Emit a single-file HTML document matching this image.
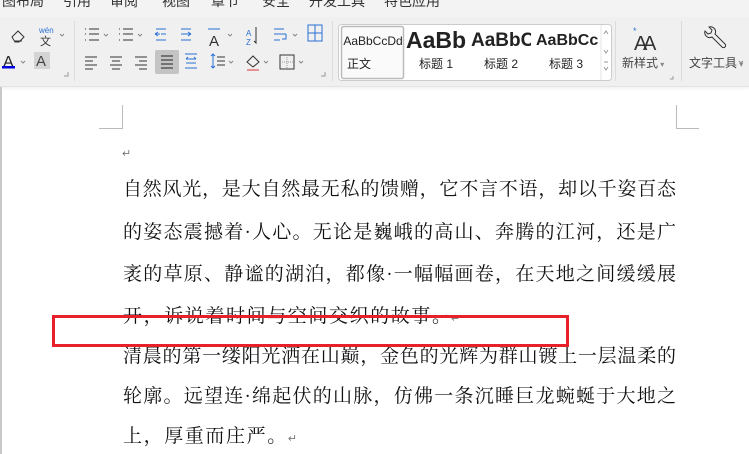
<!DOCTYPE html>
<html><head><meta charset="utf-8"><style>
body{margin:0;width:749px;height:454px;overflow:hidden;background:#fff;position:relative;font-family:"Liberation Sans","Noto Sans CJK SC",sans-serif}
.a{position:absolute}
#menu{left:0;top:0;width:749px;height:17px;background:#f3f3f3;overflow:hidden}
#menu span{position:absolute;top:-9px;font-size:14px;color:#333}
#tb{left:0;top:17px;width:749px;height:69px;background:#f0f0f0;border-bottom:1px solid #e4e4e4;box-shadow:0 2px 3px rgba(0,0,0,.05)}
.sep{position:absolute;top:4px;width:1px;height:60px;background:#dcdcdc}
.t{position:absolute;font-size:13px;color:#222}
.doc{font-family:"Liberation Serif","Noto Serif CJK SC",serif;font-size:19px;color:#111;position:absolute;left:123px;width:553px;text-align:justify;text-align-last:justify;white-space:nowrap;line-height:24px}
.ret{color:#777;font-size:11px}
</style></head><body>
<div id="menu" class="a">
<span style="left:2px">图布局</span><span style="left:63px">引用</span><span style="left:110px">审阅</span><span style="left:162px">视图</span><span style="left:211px">章节</span><span style="left:262px">安全</span><span style="left:309px">开发工具</span><span style="left:384px">特色应用</span>
</div>
<div id="tb" class="a">
<div class="sep" style="left:74px"></div><div class="sep" style="left:332px"></div><div class="sep" style="left:615px"></div><div class="sep" style="left:681px"></div>
<svg class="a" style="left:0;top:0" width="749" height="69" fill="none" stroke="#333" stroke-width="1">
<path d="M12 20 l6-6 6 6-5 5h-4z M14 24h8"/>
<text x="39" y="16" font-size="8" fill="#2a6fd6" stroke="none" font-family="Liberation Sans">wén</text>
<text x="40" y="28" font-size="11" fill="#333" stroke="none" font-family="Noto Sans CJK SC">文</text>
<path d="M60 17l2 2 2-2" stroke="#888"/>
<text x="3" y="50" font-size="16" fill="#222" stroke="none" font-family="Liberation Sans">A</text>
<rect x="2" y="49" width="13" height="2.5" fill="#0000e0" stroke="none"/>
<path d="M21 44l2 2 2-2" stroke="#888"/>
<rect x="34" y="35" width="16" height="17" fill="#d4d4d4" stroke="none"/>
<text x="36" y="49" font-size="15" fill="#444" stroke="none" font-family="Liberation Sans">A</text>
<path d="M64 59h4v-4" stroke="#999"/>
<path d="M85 12h1M85 17h1M85 23h1M89 12h10M89 17h10M89 23h10"/><path d="M104 17l2 2 2-2" stroke="#888"/>
<path d="M119 12h1M119 17h1M119 23h1M123 12h10M123 17h10M123 23h10"/><path d="M138 17l2 2 2-2" stroke="#888"/>
<path d="M156 12h10M161 17h5M156 23h10M155 17l3-2M155 17l3 2M155 17h5" stroke="#2a6fd6"/>
<path d="M181 12h10M181 17h5M181 23h10M191 17l-3-2M191 17l-3 2M186 17h5" stroke="#2a6fd6"/>
<path d="M208 12h12" stroke="#2a6fd6"/><text x="209" y="29" font-size="15" fill="#333" stroke="none" font-family="Liberation Sans">A</text><path d="M228 17l2 2 2-2" stroke="#888"/>
<text x="246" y="19" font-size="8" fill="#2a6fd6" stroke="none">A</text><text x="246" y="28" font-size="8" fill="#2a6fd6" stroke="none">Z</text><path d="M256 10v16l-2-2" />
<path d="M274 12h10M274 17h12M274 23h6M286 17v5h-4" stroke="#2a6fd6"/><path d="M293 17l2 2 2-2" stroke="#888"/>
<rect x="308" y="8" width="14" height="16" stroke="#2a6fd6"/><path d="M308 16h14M315 8v16" stroke="#2a6fd6"/>
<path d="M85 40h12M85 44h8M85 48h12M85 52h8"/>
<path d="M110 40h12M112 44h8M110 48h12M112 52h8"/>
<path d="M135 40h12M139 44h8M135 48h12M139 52h8"/>
<rect x="155" y="33" width="24" height="24" rx="2" fill="#c4c4c4" stroke="none"/>
<path d="M161 39h12M161 43h12M161 47h12M161 51h12" stroke="#222"/>
<path d="M185 37h12M185 51h12M186 42h10M186 42l2-2M196 42l-2-2M186 46h10" stroke="#2a6fd6"/>
<path d="M213 37v14M211 39l2-2 2 2M211 49l2 2 2-2" stroke="#2a6fd6"/><path d="M217 40h8M217 44h8M217 48h8"/><path d="M229 44l2 2 2-2" stroke="#888"/>
<path d="M247 45l6-6 6 6-6 5z"/><path d="M247 53h12" stroke="#d33"/><path d="M264 44l2 2 2-2" stroke="#888"/>
<rect x="280" y="38" width="14" height="14"/><path d="M287 38v14M280 45h14" stroke="#999" stroke-dasharray="1 1"/><path d="M299 44l2 2 2-2" stroke="#888"/>
<path d="M321 59h4v-4" stroke="#999"/>
<rect x="338.5" y="7.5" width="273" height="56" rx="3" fill="#fff" stroke="#ccc"/>
<rect x="341.5" y="9.5" width="62" height="52" rx="2" fill="#fafafa" stroke="#bbb" stroke-width="1.5"/>
<path d="M601 8v55" stroke="#e4e4e4"/>
<path d="M604 17l2-3 2 3M604 33l2 3 2-3M604 45h4M604 50l2 3 2-3" stroke="#999"/>
<text x="634" y="33" font-size="20" fill="#333" stroke="none" font-family="Liberation Sans">A</text><text x="643" y="33" font-size="20" fill="#333" stroke="none" font-family="Liberation Sans">A</text>
<text x="633" y="17" font-size="9" fill="#2a6fd6" stroke="none">*</text>
<path d="M670 62h3v-3" stroke="#999"/>
<path d="M705 14a5 5 0 0 0 7 6l10 10a2 2 0 0 0 3-3l-10-10a5 5 0 0 0-6-7l3 3-1 3-3 1z"/>
<path d="M739 44l2 2 2-2" stroke="#888"/>
</svg>
<div class="t" style="left:341px;top:17px;width:64px;text-align:center;font-size:12px">AaBbCcDd</div>
<div class="t" style="left:347px;top:38px;font-size:12px">正文</div>
<div class="t" style="left:406px;top:10px;font-size:23px;font-weight:bold">AaBb</div>
<div class="t" style="left:471px;top:13px;font-size:19px;font-weight:bold;width:60px;overflow:hidden">AaBbC</div>
<div class="t" style="left:536px;top:15px;font-size:16px;font-weight:bold;width:62px;overflow:hidden">AaBbCc</div>
<div class="t" style="left:419px;top:38px;font-size:12px">标题 1</div>
<div class="t" style="left:484px;top:38px;font-size:12px">标题 2</div>
<div class="t" style="left:549px;top:38px;font-size:12px">标题 3</div>
<div class="t" style="left:622px;top:37px;font-size:12px;color:#444">新样式<span style="font-size:8px;color:#888"> ▾</span></div>
<div class="t" style="left:689px;top:37px;font-size:12px;color:#444">文字工具<span style="font-size:8px;color:#888"> ▾</span></div>
</div>
<div class="a" style="left:0;top:87px;width:2px;height:367px;background:#c8c8c8"></div>
<div class="a" style="left:99px;top:128px;width:23px;height:1px;background:#bbb"></div>
<div class="a" style="left:122px;top:105px;width:1px;height:24px;background:#bbb"></div>
<div class="a" style="left:676px;top:105px;width:1px;height:24px;background:#bbb"></div>
<div class="a" style="left:676px;top:128px;width:23px;height:1px;background:#bbb"></div>
<div class="a ret" style="left:122px;top:147px">↵</div>
<div class="doc" style="top:178px">自然风光，是大自然最无私的馈赠，它不言不语，却以千姿百态</div>
<div class="doc" style="top:221px">的姿态震撼着·人心。无论是巍峨的高山、奔腾的江河，还是广</div>
<div class="doc" style="top:263px">袤的草原、静谧的湖泊，都像·一幅幅画卷，在天地之间缓缓展</div>
<div class="doc" style="top:305px;text-align-last:left;letter-spacing:1.6px">开，诉说着时间与空间交织的故事。·<span class="ret">↵</span></div>
<div class="doc" style="top:345px">清晨的第一缕阳光洒在山巅，金色的光辉为群山镀上一层温柔的</div>
<div class="doc" style="top:385px">轮廓。远望连·绵起伏的山脉，仿佛一条沉睡巨龙蜿蜒于大地之</div>
<div class="doc" style="top:425px;text-align-last:left;letter-spacing:1.6px">上，厚重而庄严。<span class="ret">↵</span></div>
<div class="a" style="left:52px;top:315px;width:511px;height:26px;border:3px solid #e8202a"></div>
</body></html>
